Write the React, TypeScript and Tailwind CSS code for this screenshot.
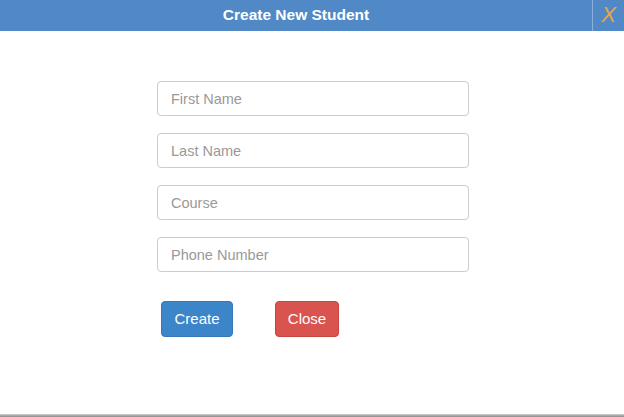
import React from "react";

export default function App() {
  const fields = ["First Name", "Last Name", "Course", "Phone Number"];
  return (
    <div className="w-[624px] h-[417px] bg-white flex flex-col overflow-hidden" style={{ fontFamily: '"Liberation Sans", Arial, sans-serif' }}>
      <div className="h-[31px] bg-[#5089c5] flex shrink-0">
        <div className="flex-1 flex items-center justify-center text-white font-bold text-[15.5px] pb-[2px]">Create New Student</div>
        <div className="w-px bg-[#8ab0dc]" />
        <div className="w-[31px] flex items-center justify-center text-[#e9a640] italic text-[22px] leading-none pb-[2px]">X</div>
      </div>
      <div className="flex-1 flex flex-col pt-[50px] pl-[157px]">
        <div className="flex flex-col gap-[17px]">
          {fields.map((f) => (
            <input
              key={f}
              placeholder={f}
              className="w-[312px] h-[35px] border border-[#cccccc] rounded-[4px] px-[13px] text-[14.5px] text-[#555] placeholder:text-[#999] outline-none"
            />
          ))}
        </div>
        <div className="flex gap-[42px] mt-[29px] pl-[4px]">
          <button className="w-[72px] h-[36px] rounded-[4px] bg-[#3d85c9] border border-[#3577b8] text-white text-[15px]">Create</button>
          <button className="w-[64px] h-[36px] rounded-[4px] bg-[#d9534f] border border-[#c9443f] text-white text-[15px]">Close</button>
        </div>
      </div>
      <div className="h-[3px] shrink-0 bg-gradient-to-b from-[#d0d0d0] to-[#8a8a8a]" />
    </div>
  );
}
